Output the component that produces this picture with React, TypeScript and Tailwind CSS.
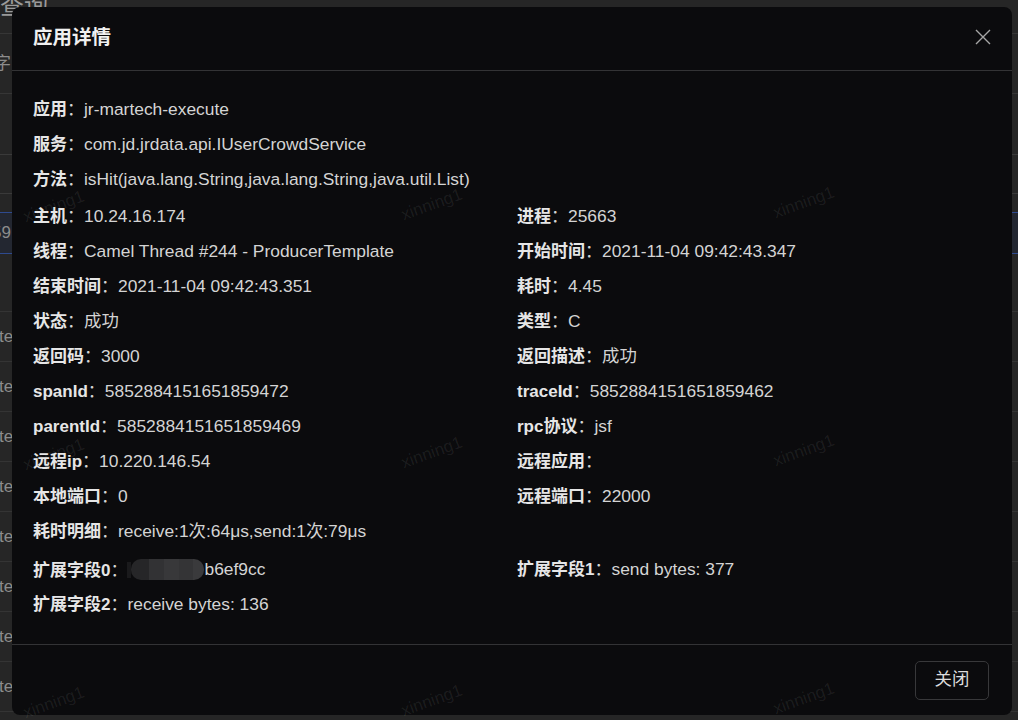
import React from "react";

const FONT = '"Liberation Sans", "Noto Sans CJK SC", sans-serif';

type Item = { label: string; value: React.ReactNode };

function Redacted() {
  return (
    <span className="inline-flex items-center align-middle">
      <span className="inline-block w-[4px] h-[16px] bg-[#1a1a1c]" />
      <span className="inline-flex h-[21px] rounded-[10px] overflow-hidden">
        <span className="w-[18px] bg-[#262628]" />
        <span className="w-[15px] bg-[#323234]" />
        <span className="w-[15px] bg-[#38383a]" />
        <span className="w-[14px] bg-[#343436]" />
        <span className="w-[11px] bg-[#3a3a3c]" />
      </span>
    </span>
  );
}

const rows: { items: Item[]; full?: boolean; mt?: string }[] = [
  { full: true, items: [{ label: "应用", value: "jr-martech-execute" }] },
  { full: true, items: [{ label: "服务", value: "com.jd.jrdata.api.IUserCrowdService" }] },
  { full: true, items: [{ label: "方法", value: "isHit(java.lang.String,java.lang.String,java.util.List)" }] },
  { mt: "mt-[2px]", items: [{ label: "主机", value: "10.24.16.174" }, { label: "进程", value: "25663" }] },
  { items: [{ label: "线程", value: "Camel Thread #244 - ProducerTemplate" }, { label: "开始时间", value: "2021-11-04 09:42:43.347" }] },
  { items: [{ label: "结束时间", value: "2021-11-04 09:42:43.351" }, { label: "耗时", value: "4.45" }] },
  { items: [{ label: "状态", value: "成功" }, { label: "类型", value: "C" }] },
  { items: [{ label: "返回码", value: "3000" }, { label: "返回描述", value: "成功" }] },
  { items: [{ label: "spanId", value: "5852884151651859472" }, { label: "traceId", value: "5852884151651859462" }] },
  { items: [{ label: "parentId", value: "5852884151651859469" }, { label: "rpc协议", value: "jsf" }] },
  { items: [{ label: "远程ip", value: "10.220.146.54" }, { label: "远程应用", value: "" }] },
  { items: [{ label: "本地端口", value: "0" }, { label: "远程端口", value: "22000" }] },
  { full: true, items: [{ label: "耗时明细", value: "receive:1次:64μs,send:1次:79μs" }] },
  {
    mt: "mt-[3px]",
    items: [
      { label: "扩展字段0", value: (<span className="inline-flex items-center"><Redacted />b6ef9cc</span>) },
      { label: "扩展字段1", value: "send bytes: 377" },
    ],
  },
  { full: true, items: [{ label: "扩展字段2", value: "receive bytes: 136" }] },
];

function Field({ item }: { item: Item }) {
  return (
    <div className="flex items-center whitespace-nowrap">
      <span className="font-bold text-[#e6e6e6] text-[17px]">{item.label}</span>
      <span className="text-[#d4d4d4] text-[17px]">：</span>
      <span className="text-[#d4d4d4]">{item.value}</span>
    </div>
  );
}

const marks = [
  [22, 190], [400, 188], [772, 186],
  [22, 438], [400, 436], [772, 434],
  [22, 686], [400, 684], [772, 682],
];

export default function App() {
  return (
    <div
      className="relative w-[1018px] h-[720px] overflow-hidden bg-[#262626] text-[#8c8c8c]"
      style={{ fontFamily: FONT }}
    >
      {/* background page */}
      <div className="flex flex-col w-full">
        <div className="h-[40px] border-b border-[#363636] text-[24px] leading-[24px] -mt-[6px] pt-0 text-[#9a9a9a]">
          查询
        </div>
        <div className="h-[60px] border-b border-[#363636] flex items-center text-[17px] -ml-[6px]">
          字
        </div>
        <div className="h-[60px]" />
        <div className="h-[40px] border border-[#3a3a3a] rounded-[6px] -ml-[20px] w-[1060px]" />
        <div className="h-[18px]" />
        <div className="h-[42px] border-y border-[#2e4a8f] bg-[#232731] flex items-center text-[17px] -ml-[8px]">
          59
        </div>
        <div className="h-[58px] border-b border-[#343434]" />
        {[0, 1, 2, 3, 4, 5, 6, 7].map((i) => (
          <div key={i} className="h-[50px] border-b border-[#343434] flex items-center text-[17px] -ml-[1px]">
            te
          </div>
        ))}
      </div>

      {/* modal */}
      <div className="absolute left-[12px] top-[7px] w-[1000px] h-[708px] rounded-[8px] bg-[#0b0b0d] flex flex-col text-[17.4px] leading-[35px]">
        <div className="h-[64px] shrink-0 border-b border-[#333335] flex items-center justify-between pl-[21px] pr-[21px]">
          <span className="text-[19.5px] font-bold text-[#f0f0f0] -mt-[3px]">应用详情</span>
          <svg width="16" height="16" viewBox="0 0 16 16" className="-mt-[3px]">
            <path d="M1 1 L15 15 M15 1 L1 15" stroke="#a6a6a6" strokeWidth="1.4" fill="none" />
          </svg>
        </div>
        <div className="flex-1 pt-[21px] px-[21px]">
          {rows.map((r, idx) => (
            <div key={idx} className={`flex h-[35px] ${r.mt ?? ""}`}>
              {r.full ? (
                <Field item={r.items[0]} />
              ) : (
                <>
                  <div className="w-[484px] shrink-0">
                    <Field item={r.items[0]} />
                  </div>
                  <div className="flex-1">
                    <Field item={r.items[1]} />
                  </div>
                </>
              )}
            </div>
          ))}
        </div>
        <div className="h-[71px] shrink-0 border-t border-[#333335] flex items-center justify-end pr-[23px]">
          <button className="w-[74px] h-[39px] rounded-[5px] border border-[#38383a] bg-transparent text-[#dcdcdc] text-[17.4px] leading-none flex items-center justify-center">
            关闭
          </button>
        </div>
      </div>

      {/* watermarks */}
      {marks.map(([x, y], i) => (
        <span
          key={i}
          className="absolute pointer-events-none text-[17px] leading-[17px] text-white/[0.08] origin-center -rotate-[20deg] whitespace-nowrap"
          style={{ left: x, top: y + 8 }}
        >
          xinning1
        </span>
      ))}
    </div>
  );
}
